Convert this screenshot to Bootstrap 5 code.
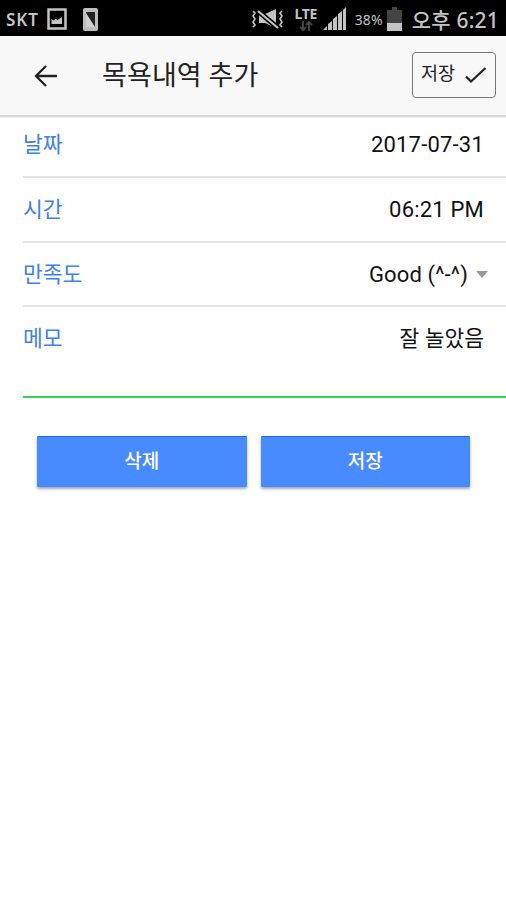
<!DOCTYPE html>
<html lang="ko">
<head>
<meta charset="utf-8">
<meta name="viewport" content="width=device-width, initial-scale=1">
<title>목욕내역 추가</title>
<link href="https://cdn.jsdelivr.net/npm/bootstrap@5.3.0/dist/css/bootstrap.min.css" rel="stylesheet">
<style>
body{font-family:Roboto,"Noto Sans CJK KR",sans-serif;background:#fff;color:#111;min-height:900px;overflow-x:hidden}
svg{display:block;flex:none}
.status-bar{height:36px;background:#000;color:#c4c4c4;padding:2px 7px 0 6px;white-space:nowrap;line-height:1}
.carrier{font:600 17px/1 "Noto Sans",sans-serif;width:41px;letter-spacing:.9px}
.network{width:26px;line-height:1}
.network-type{font:700 14px/14px "Noto Sans",sans-serif;letter-spacing:-.3px}
.battery-pct{font:14px/1 "Noto Sans",sans-serif;width:32px;letter-spacing:.1px;padding-top:2px}
.clock{font:500 21px/34px "Noto Sans","Noto Sans CJK KR",sans-serif;padding-top:2px;letter-spacing:.2px;margin-left:10px}
.app-header{height:81px;background:#f8f8f8;border-bottom:2px solid #d8d8d8;padding:0 10px 0 33px;box-shadow:0 1px 1px #eee}
.app-title{font-size:27px;line-height:40px;font-weight:400;color:#222;margin-left:44px;letter-spacing:.1px;padding-top:1px}
.save-top{width:84px;height:46px;margin-top:-1px;border:1.5px solid #777;border-radius:4px;font-size:18.5px;line-height:1;color:#222;padding:0 8px 1px}
.field{height:64.5px;margin-left:23px;padding:2px 22px 0 0;border-bottom:2px solid #e4e4e4;font-size:21.5px;line-height:32px}
.field-first{height:61px;padding-bottom:5px}
.field-rate{padding-right:18px}
.field-memo{height:91px;border-bottom-color:#32d35a;padding-top:16px}
.field-name{color:#3d80ef}
.v-date,.v-time{font-size:22px;letter-spacing:.2px}
.v-rate{font-size:22px;letter-spacing:.15px}
.caret{width:0;border:6.5px solid transparent;border-top:7px solid #999;border-bottom:0}
.actions{padding:38px 36px 0 37px;gap:14px}
.action{height:51px;background:#488aff;color:#fff;border:0;border-top:1px solid #1b6ce6;border-radius:1px;font-size:19px;line-height:1;font-weight:500;padding:0 0 1px;box-shadow:0 2px 3px rgba(0,0,0,.35)}
</style>
<script src="https://cdn.jsdelivr.net/npm/bootstrap@5.3.0/dist/js/bootstrap.bundle.min.js"></script>
</head>
<body>
<div class="status-bar d-flex align-items-center">
  <span class="carrier">SKT</span>
  <svg width="20" height="22" viewBox="0 0 20 22"><rect x="1.500" y="1.500" width="17" height="19" fill="none" stroke="#c4c4c4" stroke-width="2.500"/><path d="M4.500 16V11l2 1.500 2-1.500 2 1 4.500-3v7z" fill="#c4c4c4"/></svg>
  <svg class="ms-3" width="15" height="23" viewBox="0 0 15 23"><rect width="15" height="23" rx="2" fill="#bdbdbd"/><path d="M3 4h9v15H3z" fill="#222"/><path d="M3 5l9 14H3z" fill="#d0d0d0"/></svg>
  <svg class="ms-auto" width="34" height="22" viewBox="0 0 34 22"><g fill="none" stroke="#c4c4c4" stroke-width="1.600"><path d="M2 3l2 2-2 3 2 3-2 3 2 3-2 2M31 3l-2 2 2 3-2 3 2 3-2 3 2 2"/></g><path d="M8 6h6L25 1v19l-11-5H8z" fill="#c4c4c4"/><path d="M7 3l20 17" stroke="#000" stroke-width="5"/><path d="M7 3l20 17" stroke="#c4c4c4" stroke-width="2.200"/></svg>
  <div class="network ms-2 d-flex flex-column align-items-center"><span class="network-type">LTE</span><svg width="14" height="11" viewBox="0 0 14 11"><path d="M4 0v9m-3-3l3 3 3-3M10 10V1m-3 3l3-3 3 3" fill="none" stroke="#444" stroke-width="2"/></svg></div>
  <svg class="ms-1 me-2" width="24" height="24" viewBox="0 0 24 24"><path d="M0 23l4-4v4zM5 17l4-3v9H5zM10 12l4-3v14h-4zM15 7l4-3v19h-4zM20 3l3-3v23h-3z" fill="#c4c4c4"/></svg>
  <span class="battery-pct">38%</span>
  <svg width="15" height="24" viewBox="0 0 15 24"><path d="M5 0h5v3h5v21H0V3h5z" fill="#444"/><path d="M0 16h15v8H0z" fill="#c4c4c4"/></svg>
  <span class="clock">오후 6:21</span>
</div>
<header class="app-header d-flex align-items-center">
  <svg width="25" height="24" viewBox="0 0 25 24"><path d="M13 2L3 12l10 10M3 12h21" fill="none" stroke="#222" stroke-width="2.300"/></svg>
  <h1 class="app-title mb-0">목욕내역 추가</h1>
  <button class="save-top ms-auto bg-transparent d-flex align-items-center justify-content-between">저장
    <svg width="22" height="18" viewBox="0 0 22 18"><path d="M1 10.500l5 5L20.500 2" fill="none" stroke="#222" stroke-width="2.200"/></svg>
  </button>
</header>
<main>
  <div class="field field-first d-flex align-items-center justify-content-between"><span class="field-name">날짜</span><span class="v-date">2017-07-31</span></div>
  <div class="field d-flex align-items-center justify-content-between"><span class="field-name">시간</span><span class="v-time">06:21 PM</span></div>
  <div class="field field-rate d-flex align-items-center"><span class="field-name me-auto">만족도</span><span class="v-rate">Good (^-^)</span><span class="caret ms-2"></span></div>
  <div class="field field-memo d-flex align-items-start justify-content-between"><span class="field-name">메모</span><span class="v-memo">잘 놀았음</span></div>
  <div class="actions d-flex">
    <button class="action flex-fill">삭제</button>
    <button class="action flex-fill">저장</button>
  </div>
</main>
</body>
</html>
